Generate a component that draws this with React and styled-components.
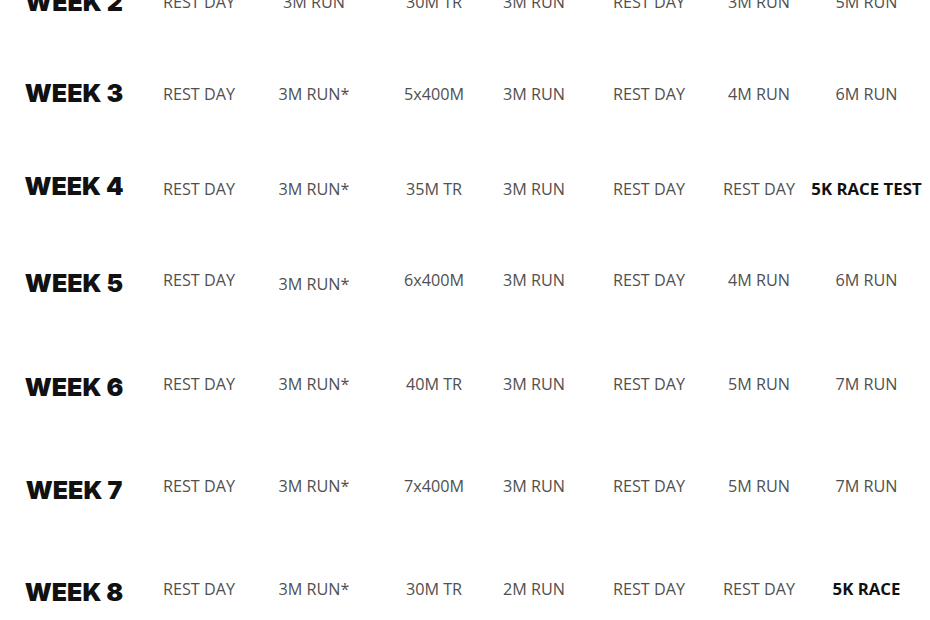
import React from "react";
import styled, { createGlobalStyle } from "styled-components";

const Global = createGlobalStyle`
  html, body {
    margin: 0;
    padding: 0;
    background: #ffffff;
    overflow: hidden;
  }
`;

const Table = styled.div`
  display: flex;
  flex-direction: column;
  margin-top: -18px;
  width: 935px;
`;

const Row = styled.div`
  display: grid;
  grid-template-columns: 148px 102px 128px 112px 88px 142px 78px 137px;
  grid-template-rows: 40px;
  height: 40px;
  align-items: center;
  margin-top: ${(p) => p.$gap}px;
`;

const Label = styled.div`
  display: flex;
  justify-content: center;
  font-family: Inter, "Liberation Sans", sans-serif;
  font-weight: 900;
  font-size: 25px;
  line-height: 40px;
  color: #111111;
  white-space: nowrap;
  transform: translateY(${(p) => p.$shift || 0}px);
`;

const Cell = styled.div`
  display: flex;
  justify-content: center;
  font-family: "Open Sans", "Liberation Sans", sans-serif;
  font-weight: ${(p) => (p.$bold ? 700 : 400)};
  font-size: ${(p) => (p.$bold ? "16.8px" : "16.2px")};
  line-height: 40px;
  color: ${(p) => (p.$bold ? "#111111" : "#505050")};
  white-space: nowrap;
  transform: translateY(${(p) => p.$shift || 0}px);
`;

const weeks = [
  { n: 2, gap: 0, shift: 0, days: ["REST DAY", "3M RUN", "30M TR", "3M RUN", "REST DAY", "3M RUN", "5M RUN"] },
  { n: 3, gap: 52, shift: -1, days: ["REST DAY", "3M RUN*", "5x400M", "3M RUN", "REST DAY", "4M RUN", "6M RUN"] },
  { n: 4, gap: 55, shift: -3, days: ["REST DAY", "3M RUN*", "35M TR", "3M RUN", "REST DAY", "REST DAY", { t: "5K RACE TEST", bold: true }] },
  { n: 5, gap: 51, shift: 3, days: ["REST DAY", { t: "3M RUN*", shift: 4 }, "6x400M", "3M RUN", "REST DAY", "4M RUN", "6M RUN"] },
  { n: 6, gap: 64, shift: 2.5, days: ["REST DAY", "3M RUN*", "40M TR", "3M RUN", "REST DAY", "5M RUN", "7M RUN"] },
  { n: 7, gap: 62, shift: 3.5, days: ["REST DAY", "3M RUN*", "7x400M", "3M RUN", "REST DAY", "5M RUN", "7M RUN"] },
  { n: 8, gap: 63, shift: 3, days: ["REST DAY", "3M RUN*", "30M TR", "2M RUN", "REST DAY", "REST DAY", { t: "5K RACE", bold: true }] },
];

export default function App() {
  return (
    <>
      <Global />
      <Table>
        {weeks.map((w) => (
          <Row key={w.n} $gap={w.gap}>
            <Label $shift={w.shift}>WEEK {w.n}</Label>
            {w.days.map((d, i) => {
              const item = typeof d === "string" ? { t: d } : d;
              return (
                <Cell key={i} $bold={item.bold} $shift={item.shift}>
                  {item.t}
                </Cell>
              );
            })}
          </Row>
        ))}
      </Table>
    </>
  );
}
